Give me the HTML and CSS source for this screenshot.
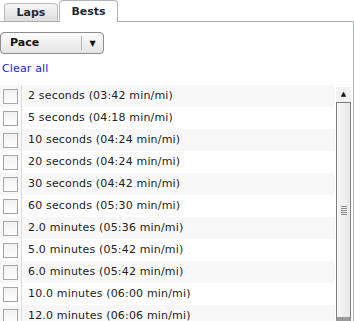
FILE: index.html
```html
<!DOCTYPE html>
<html lang="en">
<head>
  <meta charset="UTF-8">
  <title>Bests</title>
  <link rel="stylesheet" href="styles.css">
</head>
<body>

<div class="tabs">
  <div class="tab">Laps</div>
  <div class="tab active">Bests</div>
</div>

<div class="panel">
  <!-- Metric picker -->
  <div class="select">
    <span class="select-label">Pace</span>
    <span class="select-arrow">&#9660;</span>
  </div>

  <a href="#" class="clear">Clear all</a>

  <!-- Bests list -->
  <div class="list">
    <div class="rows">
      <div class="row"><span class="check"></span><span class="label">2 seconds (03:42 min/mi)</span></div>
      <div class="row"><span class="check"></span><span class="label">5 seconds (04:18 min/mi)</span></div>
      <div class="row"><span class="check"></span><span class="label">10 seconds (04:24 min/mi)</span></div>
      <div class="row"><span class="check"></span><span class="label">20 seconds (04:24 min/mi)</span></div>
      <div class="row"><span class="check"></span><span class="label">30 seconds (04:42 min/mi)</span></div>
      <div class="row"><span class="check"></span><span class="label">60 seconds (05:30 min/mi)</span></div>
      <div class="row"><span class="check"></span><span class="label">2.0 minutes (05:36 min/mi)</span></div>
      <div class="row"><span class="check"></span><span class="label">5.0 minutes (05:42 min/mi)</span></div>
      <div class="row"><span class="check"></span><span class="label">6.0 minutes (05:42 min/mi)</span></div>
      <div class="row"><span class="check"></span><span class="label">10.0 minutes (06:00 min/mi)</span></div>
      <div class="row"><span class="check"></span><span class="label">12.0 minutes (06:06 min/mi)</span></div>
    </div>
    <div class="scrollbar">
      <div class="scroll-up">&#9650;</div>
      <div class="scroll-thumb"><span class="grip"></span></div>
    </div>
  </div>
</div>

</body>
</html>
```

FILE: styles.css
```css
/* General Styling */
body {
  margin: 0;
  font-family: 'DejaVu Sans', Verdana, sans-serif;
  font-size: 11px;
  color: #222;
  background: #fff;
  overflow: hidden;
}

/* Tabs */
.tabs {
  display: flex;
  align-items: flex-end;
  height: 21px;
  padding-left: 4px;
  border-bottom: 1px solid #a8b0ac;
}

.tab {
  width: 52px;
  height: 17px;
  line-height: 17px;
  margin-right: 1px;
  text-align: center;
  font-weight: bold;
  color: #1e2a33;
  border: 1px solid #bcbcbc;
  border-bottom: none;
  border-radius: 4px 4px 0 0;
  background: linear-gradient(#f6f6f6, #dedede);
}

.tab.active {
  width: 57px;
  height: 21px;
  line-height: 22px;
  margin-bottom: -1px;
  background: #fff;
  border-color: #b4b4b4;
}

.panel {
  height: 299px;
  border-right: 1px solid #a8b0ac;
  padding-top: 10px;
  box-sizing: border-box;
}

/* Select */
.select {
  display: flex;
  align-items: center;
  width: 102px;
  height: 20px;
  border: 1px solid #8c8c8c;
  border-radius: 4px;
  background: linear-gradient(#fdfdfd, #e4e4e4);
}

.select-label {
  flex: 1;
  padding-left: 9px;
  font-weight: bold;
  color: #111;
  border-right: 1px solid #b0b0b0;
  line-height: 14px;
}

.select-arrow {
  width: 21px;
  text-align: center;
  font-size: 8px;
  color: #111;
}

.clear {
  display: block;
  margin: 8px 0 0 2px;
  height: 14px;
  line-height: 14px;
  letter-spacing: 0.15px;
  color: #1a1aee;
  text-decoration: none;
}

/* List */
.list {
  display: flex;
  margin-top: 9px;
  height: 237px;
  overflow: hidden;
}

.rows {
  flex: 1;
}

.row {
  display: flex;
  align-items: center;
  height: 22px;
}

.row:nth-child(odd) {
  background: #f8f8f8;
}

.check {
  width: 13px;
  height: 13px;
  margin: 0 3px 0 3px;
  border: 1px solid #a6a6a6;
  background: linear-gradient(#f2f2f2, #fdfdfd);
}

.label {
  height: 22px;
  line-height: 22px;
  padding-left: 6px;
  border-left: 1px solid #dcdcdc;
  letter-spacing: 0.17px;
  color: #222;
}

/* Scrollbar */
.scrollbar {
  width: 15px;
  margin: 0 2px 0 1px;
  display: flex;
  flex-direction: column;
}

.scroll-up {
  height: 15px;
  margin-top: 2px;
  font-size: 7px;
  line-height: 14px;
  text-align: center;
  color: #111;
  background: #f2f2f2;
}

.scroll-thumb {
  flex: 1;
  display: flex;
  align-items: center;
  justify-content: center;
  border: 1px solid #7e7e7e;
  border-bottom: 5px solid #9a9a9a;
  background: linear-gradient(90deg, #f7f7f7, #e8e8e8);
}

.grip {
  width: 6px;
  height: 9px;
  background: repeating-linear-gradient(#8a8a8a 0, #8a8a8a 1px, transparent 1px, transparent 2px);
}
```
